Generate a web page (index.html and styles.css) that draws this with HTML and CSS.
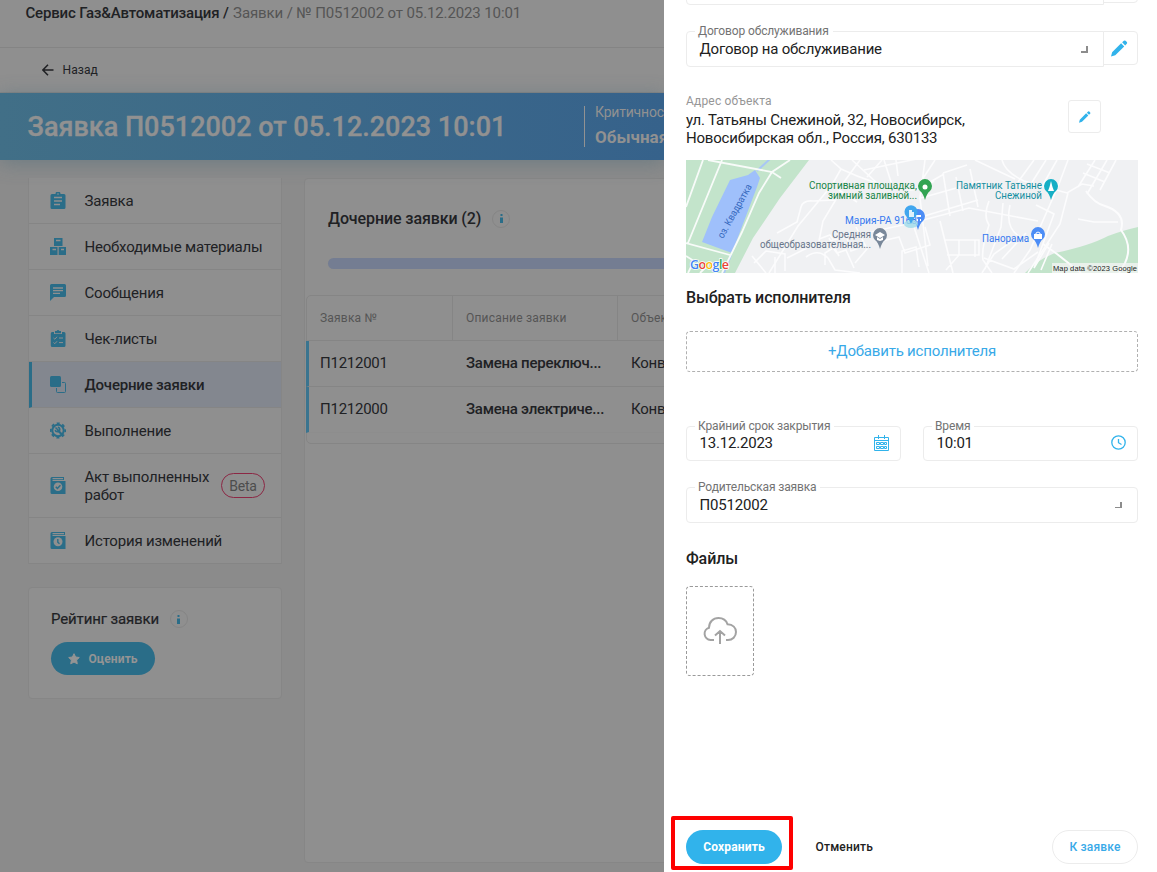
FILE: index.html
```html
<!DOCTYPE html>
<html lang="ru">
<head>
<meta charset="utf-8">
<title>Заявка П0512002</title>
<link rel="stylesheet" href="styles.css">
</head>
<body>
<div class="app">
<div class="page">
  <header class="crumbs"><b class="org">Сервис Газ&amp;Автоматизация /</b><span class="trail">Заявки / № П0512002 от 05.12.2023 10:01</span></header>
  <div class="back">
    <svg width="12" height="12" viewBox="0 0 12 12" fill="none" stroke="currentColor" stroke-width="1.5"><path d="M11.5 6H1M6 .8.9 6 6 11.200"/></svg>
    <span>Назад</span>
  </div>
  <div class="banner">
    <h1>Заявка П0512002 от 05.12.2023 10:01</h1>
    <div class="crit"><span>Критичность</span><b>Обычная</b></div>
  </div>
  <div class="content">
    <aside class="side">
      <nav class="menu">
        <a class="item"><svg class="ic" viewBox="0 0 16 17"><path fill="currentColor" d="M2 2h3.500a2.500 2.500 0 0 1 5 0H14a1.500 1.500 0 0 1 1.500 1.500v12A1.500 1.500 0 0 1 14 17H2A1.500 1.500 0 0 1 .5 15.500v-12A1.500 1.500 0 0 1 2 2z"/><path class="cut" d="M4 5.500h8M4 9h8M4 12.500h6"/><circle cx="8" cy="2" r=".8" fill="#8f8f8f"/></svg><span>Заявка</span></a>
        <a class="item"><svg class="ic" viewBox="0 0 16 17"><path fill="currentColor" d="M4 0h8.500v8H4zM0 9h7.500v8H0zM8.700 9H16v8H8.700z"/><path class="cut" d="M6 2.500h4.500M2.500 11.500H6M11 11.500h3"/></svg><span>Необходимые материалы</span></a>
        <a class="item"><svg class="ic" viewBox="0 0 16 17"><path fill="currentColor" d="M1.500 0h13A1.500 1.500 0 0 1 16 1.500v10a1.500 1.500 0 0 1-1.500 1.500H4l-4 4V1.500A1.500 1.500 0 0 1 1.500 0z"/><path class="cut" d="M3 4h10M3 6.700h10M3 9.400h7"/></svg><span>Сообщения</span></a>
        <a class="item"><svg class="ic" viewBox="0 0 16 17"><path fill="currentColor" d="M2.500 2H4v2h8V2h2a1.500 1.500 0 0 1 1.500 1.500v12A1.500 1.500 0 0 1 14 17H2.300A1.500 1.500 0 0 1 .8 15.500v-12A1.500 1.500 0 0 1 2.500 2zM5 1h1.700a1.400 1.400 0 0 1 2.600 0H11v2.200H5z"/><path class="cut thin" d="m3.500 8 1.300 1.200L7 6.800M3.500 12.500l1.300 1.200L7 11.300M9 8h4M9 12.600h4"/></svg><span>Чек-листы</span></a>
        <a class="item active"><svg class="ic" viewBox="0 0 16 17"><rect width="11" height="11" rx="1.500" fill="currentColor"/><path fill="none" stroke="currentColor" d="M12 6.500h2.500a1 1 0 0 1 1 1v8a1 1 0 0 1-1 1h-7a1 1 0 0 1-1-1V12"/></svg><span>Дочерние заявки</span></a>
        <a class="item"><svg class="ic" viewBox="0 0 16 17"><circle cx="8" cy="8.500" r="5.700" fill="none" stroke="currentColor" stroke-width="2"/><circle cx="8" cy="8.500" r="7.200" fill="none" stroke="currentColor" stroke-width="1.800" stroke-dasharray="3 2.655" stroke-dashoffset="1.500"/><path d="m7.500 8 4.500 4.500" stroke="currentColor" stroke-width="2.200"/><path d="M5.500 5.500 8 8M7.800 5.200a2.300 2.300 0 1 1-2.600 2.600" fill="none" stroke="currentColor" stroke-width="1.500"/></svg><span>Выполнение</span></a>
        <a class="item tall"><svg class="ic" viewBox="0 0 16 17"><path fill="currentColor" fill-rule="evenodd" d="M2 0h12v3H2.500v1H15.500v13H2A1.500 1.500 0 0 1 .5 15.500v-14A1.500 1.500 0 0 1 2 0zM2.500 1v1.200H13V1z"/><circle cx="8" cy="9.800" r="4.300" fill="#8f8f8f"/><path d="m5.800 9.800 1.600 1.700 3-3.200" fill="none" stroke="currentColor" stroke-width="1.500"/></svg><span>Акт выполненных работ</span><em class="beta">Beta</em></a>
        <a class="item"><svg class="ic" viewBox="0 0 16 17"><path fill="currentColor" fill-rule="evenodd" d="M2 0h13v3H2.500v1h13v13H2A1.500 1.500 0 0 1 .5 15.500v-14A1.500 1.500 0 0 1 2 0zM2.500 1v1.200H14V1z"/><circle cx="8" cy="9.800" r="4.500" fill="#8f8f8f"/><path d="M7.800 7v3.200l1.700 1.500" fill="none" stroke="currentColor" stroke-width="1.400"/></svg><span>История изменений</span></a>
      </nav>
      <section class="rating">
        <div class="head"><span>Рейтинг заявки</span><i class="info"><svg width="3" height="9" viewBox="0 0 3 9"><path d="M.5 0h2v2h-2zM0 3.500h3V9H0z" fill="currentColor"/></svg></i></div>
        <button class="rate"><svg width="12" height="12" viewBox="0 0 12 12"><path fill="currentColor" stroke="currentColor" stroke-linejoin="round" d="m6 .7 1.600 3.300 3.700.5-2.700 2.600.7 3.700L6 9.100l-3.300 1.700.7-3.700L.7 4.500 4.400 4z"/></svg><span>Оценить</span></button>
      </section>
    </aside>
    <main class="main">
      <div class="title"><h2>Дочерние заявки (2)</h2><i class="info"><svg width="3" height="9" viewBox="0 0 3 9"><path d="M.5 0h2v2h-2zM0 3.500h3V9H0z" fill="currentColor"/></svg></i></div>
      <div class="progress"></div>
      <div class="table">
        <div class="row th"><span>Заявка №</span><span>Описание заявки</span><span>Объект</span></div>
        <div class="row"><span>П1212001</span><b>Замена переключ...</b><span>Конвектор</span></div>
        <div class="row"><span>П1212000</span><b>Замена электриче...</b><span>Конвектор</span></div>
      </div>
    </main>
  </div>
</div>

<div class="drawer">
  <div class="pair prev"><div class="field joined"></div><div class="edit"></div></div>
  <div class="pair">
    <div class="field joined"><label>Договор обслуживания</label><span>Договор на обслуживание</span><i class="corner"></i></div>
    <div class="edit"><svg width="17" height="17" viewBox="0 0 18 18" fill="#31b3eb"><path d="M0 17.500 1.200 13 10.700 3.500 14 6.800 4.500 16.200zM11.800 2.500 13.600.8Q14.500 0 15.400.8L16.800 2.200Q17.600 3.200 16.700 4L15 5.700z"/></svg></div>
  </div>
  <div class="addr">
    <div><small>Адрес объекта</small><p>ул. Татьяны Снежиной, 32, Новосибирск, Новосибирская обл., Россия, 630133</p></div>
    <div class="box"><svg width="12" height="12" viewBox="0 0 18 18" fill="#31b3eb"><path d="M0 17.500 1.200 13 10.700 3.500 14 6.800 4.500 16.200zM11.800 2.500 13.600.8Q14.500 0 15.400.8L16.800 2.200Q17.600 3.200 16.700 4L15 5.700z"/></svg></div>
  </div>
  <svg class="map" width="452" height="113" viewBox="0 0 452 113">
    <rect width="452" height="113" fill="#f0f1f3"/>
    <path fill="#c3e4cb" d="M0 0h123L94 38 67 78 49 113H0zM452 67v46H339q12-13 30-20 34-7 53-17 16-6 30-9z"/>
    <path fill="#9fc0fb" d="m44 20 18-5 7-5 5 8-3 9-25 66-30-11 10-25z"/>
    <path fill="none" stroke="#a9c7f5" stroke-width="2" d="m71 11 15-14M38 113l7-18"/>
    <g fill="none" stroke="#f8fbf9" stroke-width="1.800">
      <path d="M104 0 86 12 73 33 56 72 36 113M22 0l64 12 9 6M17 0 0 47M36 0 2 83M0 83l44 12M0 96l8 5-6 12M14 113l8-8"/>
    </g>
    <g fill="none" stroke="#fcfcfd" stroke-width="1.600">
      <path d="M145 0l10 9-9 16-34 41-29 47M155 9q34 16 62 20 14 4 31-8M174 0l-19 26M166 0l25 23M196 0l-15 17M155 31l-18 30-4 20M153 30l18 12M91 73l20-11 4-15q2-7 12-6l22-1"/>
      <path d="m101 98 28-14 83-18 29-7 42-11 69 13M120 97q12-9 22 1l7 12 25 3M143 78l10 18M133 79l11-4 8 11M160 75l5 16 11-4M170 67l11 22-12 14M139 105V93l8-5 4 5 9-3 8 18M80 113l-14-17M68 103l12-12 19 3 0 17M89 113V97M192 82l21-5 6 16 25-8-5-18M216 113V91l14-4 3 20"/>
      <path d="m198 0 8 25M210 0l2 16M178 10l57-12M239 0l-5 38 8 68M249 0l-15 23M258 14l-19 11M257 13l7 43M270 17l7 34M284 9l8 38M257 13l24-8M235 38l60-17M235 57l57-17M228 67l15 46M254 61l13 52M259 80h34v15h-32M273 80v15l-13 15M289 80v17"/>
      <path d="M316 0q3 12 22 21l43 12 15-9 12 2M289 0l40 19M348 0l-16 22M360 0l-17 27M371 0l-17 30M382 0l-9 24-29 66-16 23M409 0l-17 27M421 0l-20 34M430 0l-16 30M401 4l23 9M397 13l22 9M382 33l-8 31-32 49"/>
      <path d="M303 41q-6 15 0 24-8 24-6 35l9 13M317 43l-2 24-16 42M324 45q-5 23 9 31l-25 18-12 19M298 98l30 11 24-17M350 45l18 9-20 54 15-25M340 73l-24 26M366 84l-11 26M392 59l16 3h24"/>
      <path stroke-width="2" d="m357 84 14 10 24 19M400 31q8 12 19 15 21 7 16 24 12 16 4 33l-6 10"/>
    </g>
    <g class="pins">
      <path fill="#32a453" d="M239 40q-2-7-5-9a7 7 0 1 1 10 0q-3 2-5 9z"/><circle cx="239" cy="27" r="2.500" fill="#fff"/>
      <path fill="#4c8df6" d="M232 70q-2-7-5-9a7 7 0 1 1 10 0q-3 2-5 9z"/><path d="M229 56h6M231 60h1M234 60h1" stroke="#fff" stroke-width="2"/>
      <path fill="#79889a" d="M194 89q-2-7-5-9a7 7 0 1 1 10 0q-3 2-5 9z"/><path fill="#fff" d="m189 75 5-3 5 3-5 3zM191 77l3 2 3-2v3l-3 1-3-1z"/>
      <path fill="#16afc5" d="M365 40q-2-7-5-9a7 7 0 1 1 10 0q-3 2-5 9z"/><path fill="#fff" d="m365 21 1.500 6 1.500 4h-6l1.500-4z"/>
      <path fill="#4c8df6" d="M352 88q-2-7-5-9a7 7 0 1 1 10 0q-3 2-5 9z"/><path fill="#fff" d="M348 74h8v5h-8z"/><path fill="none" stroke="#fff" d="M350 75v-2q2-2 4 0v2"/>
    </g>
    <g class="places">
      <text x="231" y="29" fill="#188447" textLength="108" lengthAdjust="spacingAndGlyphs">Спортивная площадка,</text><text x="231" y="39" fill="#188447" textLength="89" lengthAdjust="spacingAndGlyphs">зимний заливной...</text>
      <text x="231" y="63.500" fill="#367af0" textLength="72" lengthAdjust="spacingAndGlyphs">Мария-РА 9168</text>
      <text x="185" y="78" fill="#68758a" textLength="39" lengthAdjust="spacingAndGlyphs">Средняя</text><text x="185" y="88" fill="#68758a" textLength="111" lengthAdjust="spacingAndGlyphs">общеобразовательная...</text>
      <text x="356" y="28.500" fill="#158fa1" textLength="86" lengthAdjust="spacingAndGlyphs">Памятник Татьяне</text><text x="356" y="38.500" fill="#158fa1" textLength="47" lengthAdjust="spacingAndGlyphs">Снежиной</text>
      <text x="343" y="82" fill="#367af0" textLength="47" lengthAdjust="spacingAndGlyphs">Панорама</text>
      <text class="lake" transform="translate(37 79) rotate(-61)" fill="#3367bd" textLength="60" lengthAdjust="spacingAndGlyphs">оз. Квадратка</text>
    </g>
    <ellipse cx="225" cy="64" rx="7" ry="4" fill="#9edbea" opacity=".8"/><path fill="#40a6ee" d="M225 64q-2-5-5-8a6.500 6.500 0 1 1 10 0q-3 3-5 8z"/><path fill="#dff2fb" d="M223 50h3v7h-3zM226 52h2v5h-2z"/>
    <text class="google" x="4" y="109" textLength="39"><tspan fill="#4285f4">G</tspan><tspan fill="#ea4335">o</tspan><tspan fill="#fbbc05">o</tspan><tspan fill="#4285f4">g</tspan><tspan fill="#34a853">l</tspan><tspan fill="#ea4335">e</tspan></text>
    <rect x="366" y="103" width="86" height="10" fill="#f5f5f5" opacity=".75"/><text class="copy" x="367" y="111" textLength="84">Map data ©2023 Google</text>
  </svg>
  <h3 class="who">Выбрать исполнителя</h3>
  <div class="add">+Добавить исполнителя</div>
  <div class="dates">
    <div class="field"><label>Крайний срок закрытия</label><span>13.12.2023</span>
      <svg class="cal" width="15" height="16" viewBox="0 0 15 16" fill="none" stroke="#31b3eb"><path d="M.5 15.500v-13h14v13zM0 5.500h15M4.500 0v4M10.500 0v4"/><path d="M2.500 7.500h3v2h-3zM6.500 7.500h3v2h-3zM10.500 7.500h2v2h-2zM2.500 11.500h3v2h-3zM6.500 11.500h3v2h-3zM10.500 11.500h2v2h-2z"/></svg></div>
    <div class="field"><label>Время</label><span>10:01</span>
      <svg class="cal" width="15" height="15" viewBox="0 0 15 15" fill="none" stroke="#31b3eb" stroke-width="1.300"><circle cx="7.500" cy="7.500" r="6.700"/><path d="M7.500 4v3.700l3 1.800"/></svg></div>
  </div>
  <div class="field parent"><label>Родительская заявка</label><span>П0512002</span><i class="corner small"></i></div>
  <h3 class="files">Файлы</h3>
  <div class="upload"><svg width="34" height="28" viewBox="0 0 34 28" fill="none" stroke="#a3a3a3" stroke-width="2"><path d="M11 23H7.500A6.300 6.300 0 0 1 6 10.700C6 5 10 1 15.500 1c4.500 0 7.700 2.300 9 6.200C30 7.500 33 11 33 15c0 4.500-3.500 8-8 8h-2M17 27V14.500M12 18.500l5-4.500 5 4.500"/></svg></div>
  <footer class="foot"><button class="save">Сохранить</button><span class="cancel">Отменить</span><button class="go">К заявке</button></footer>
  <div class="mark"></div>
</div>
</div>
</body>
</html>
```
FILE: styles.css
```css
* { box-sizing: border-box; }
body { margin: 0; font: 15px/18px Roboto, sans-serif; letter-spacing: -.2px; color: #212121; background: #fff; }
h1, h2, h3, p { margin: 0; font-weight: 500; }
button { border: 0; font: 500 13px/18px Roboto, sans-serif; }
i, em { font-style: normal; }
b { font-weight: 500; }
.app { display: flex; width: 1157px; height: 872px; overflow: hidden; }

/* dimmed page */
.page { width: 664px; height: 872px; overflow: hidden; background: #8b8b8b; color: #202124; display: flex; flex-direction: column; flex: none; }
.crumbs { height: 48px; flex: none; padding: 4px 0 0 25.500px; background: #8f8f8f; border-bottom: 1px solid #848484; display: flex; gap: 4.500px; white-space: nowrap; }
.org { letter-spacing: -.18px; }
.trail { color: #555; letter-spacing: -.12px; }
.back { height: 45px; flex: none; padding-left: 42px; display: flex; align-items: center; gap: 8.500px; font-size: 12px; letter-spacing: .1px; background: #8f8f8f; border-bottom: 1px solid #858585; }
.back svg { flex: none; }
.banner { height: 67px; flex: none; position: relative; display: flex; align-items: center; padding-left: 27.500px; color: #919191; background: linear-gradient(90deg, #416f87, #36628b); box-shadow: 0 3px 18px rgba(70, 105, 120, .45); }
.banner h1 { width: 556.500px; flex: none; font-size: 27px; line-height: 34px; font-weight: 500; white-space: nowrap; letter-spacing: 0; -webkit-text-stroke: .4px; }
.crit { flex: none; border-left: 1px solid #929292; height: 41px; padding-left: 10px; display: flex; flex-direction: column; white-space: nowrap; font-size: 14px; line-height: 16px; gap: 8px; }
.crit span { margin-top: -2px; }
.crit b { font-size: 17px; line-height: 18px; font-weight: 700; letter-spacing: 0; }
.content { display: flex; gap: 22px; padding: 18px 0 0 28px; }
.side { width: 254px; flex: none; }
.menu { display: flex; flex-direction: column; background: #8f8f8f; border: solid #868686; border-width: 0 1px; }
.item { display: flex; align-items: center; height: 46px; padding-left: 21px; border-bottom: 1px solid #858585; font-weight: 400; }
.item > span { margin-left: 18.500px; white-space: nowrap; }
.item.tall { height: 64px; }
.item.tall > span { white-space: normal; width: 127px; }
.ic { width: 16px; height: 17px; color: #2a6d88; flex: none; }
.cut { fill: none; stroke: #8f8f8f; stroke-width: 1.300; }
.thin { stroke-width: 1; }
.active { background: #83878f; border-left: 3px solid #2a6d88; padding-left: 18px; font-weight: 500; }
.beta { width: 44px; height: 25px; flex: none; margin-left: 9.500px; border: 1px solid #8c2744; border-radius: 13px; text-align: center; line-height: 24px; font-size: 14px; color: #4d4d4d; }
.rating { margin-top: 23px; height: 112px; background: #8f8f8f; border: 1px solid #868686; border-radius: 4px; padding: 22px; }
.head, .title { display: flex; align-items: center; gap: 11px; }
.head { height: 18px; }
.head span { -webkit-text-stroke: .2px; letter-spacing: -.14px; }
.info { width: 18px; height: 18px; border: 1px solid #858585; border-radius: 50%; display: flex; align-items: center; justify-content: center; color: #2a6d88; flex: none; }
.rate { margin-top: 14px; width: 104px; height: 33px; border-radius: 17px; background: #2a6d88; color: #949494; display: flex; align-items: center; gap: 9px; padding: 0 0 0 16.500px; font-size: 12px; font-weight: 700; letter-spacing: .1px; }
.main { width: 600px; height: 685px; flex: none; background: #8f8f8f; border: 1px solid #868686; border-radius: 4px; padding-left: 1px; }
.title { padding: 30px 0 0 22px; height: 49px; }
.title h2 { font-size: 16px; line-height: 19px; letter-spacing: -.1px; }
.progress { margin: 30px 0 0 22px; height: 11px; border-radius: 6px; background: #747d92; }
.table { margin-top: 26px; height: 149px; border: 1px solid #858585; border-radius: 5px; }
.row { display: grid; grid-template-columns: 143px 165px 1fr; height: 46px; border-bottom: 1px solid #858585; border-left: 3px solid #3a748f; white-space: nowrap; line-height: 45px; letter-spacing: -.25px; margin-left: -1px; }
.row > * { padding-left: 11px; }
.row > * + * { padding-left: 14px; }
.row:last-child { border-bottom-color: #8d8d8d; }
.row.th { height: 45px; font-size: 12px; letter-spacing: .2px; color: #555; border-left-color: transparent; line-height: 44px; }
.th > * + * { border-left: 1px solid #858585; padding-left: 13px; }

/* drawer */
.drawer { width: 493px; height: 872px; flex: none; position: relative; padding: 0 19px 0 22px; display: flex; flex-direction: column; background: #fff; }
.pair { display: flex; height: 36px; }
.prev { height: 4px; margin-bottom: 27px; align-items: flex-end; }
.prev .field { height: 12px; margin-bottom: -1px; }
.prev .edit { height: 12px; margin-bottom: 1px; }
.field { position: relative; flex: 1; height: 36px; border: 1px solid #ececec; border-radius: 4px; padding: 8px 12px 0 12.500px; white-space: nowrap; }
.joined { border-radius: 4px 0 0 4px; }
.field label { position: absolute; top: -9px; left: 8px; padding: 0 4px 0 3px; font-size: 12px; line-height: 16px; color: #737373; background: #fff; letter-spacing: -.14px; }
.edit { width: 35px; height: 34px; margin-left: -1px; border: 1px solid #ececec; border-radius: 0 4px 4px 0; display: flex; align-items: center; justify-content: center; padding-right: 2px; }
.corner { position: absolute; right: 15px; top: 14px; width: 7px; height: 7px; border: solid #8c8c8c; border-width: 0 2px 2px 0; }
.small { border-width: 0 2px 1px 0; height: 6px; }
.addr { display: flex; justify-content: space-between; padding-right: 37px; height: 93px; padding-top: 26px; }
.addr small { display: block; font-size: 12px; line-height: 16px; color: #969696; letter-spacing: .18px; }
.addr p { width: 310px; margin-top: 2px; font-weight: 400; }
.box { width: 33px; height: 33px; margin-top: 7px; border: 1px solid #ececec; border-radius: 3px; display: flex; align-items: center; justify-content: center; }
.map { display: block; flex: none; letter-spacing: 0; }
.places { font: 10px Roboto, sans-serif; text-anchor: end; paint-order: stroke; stroke: #f0f1f3; stroke-width: 1.500px; }
.lake { text-anchor: start; stroke: none; }
.google { font: 600 12.500px "Open Sans", sans-serif; paint-order: stroke; stroke: #fff; stroke-width: 1.500px; }
.copy { font: 7.500px "Liberation Sans", sans-serif; fill: #222; }
h3 { font-size: 16px; line-height: 18px; letter-spacing: -.12px; }
.who { margin-top: 16px; }
.add { margin-top: 24px; height: 41px; flex: none; border: 1px dashed #b0b0b0; border-radius: 4px; text-align: center; line-height: 38px; color: #38a9e8; }
.dates { display: flex; gap: 22px; margin-top: 54px; }
.dates .field { height: 35px; padding-top: 7px; }
.cal { position: absolute; right: 11px; top: 8px; }
.parent { margin-top: 26px; flex: none; }
.files { margin-top: 27px; }
.upload { margin-top: 18px; width: 68px; height: 90px; border: 1px dashed #9a9a9a; border-radius: 4px; display: flex; align-items: center; justify-content: center; }
.foot { margin-top: 154px; display: flex; align-items: center; height: 34px; font-size: 12px; }
.save { width: 96px; height: 34px; border-radius: 17px; background: #31b3eb; color: #fff; font-size: 12px; font-weight: 700; padding: 0; letter-spacing: .15px; }
.cancel { margin-left: 33.500px; font-weight: 500; letter-spacing: .2px; }
.go { margin-left: auto; width: 86px; height: 34px; border: 1px solid #ececec; border-radius: 17px; background: #fff; color: #38a9e8; font-size: 12px; padding: 0; letter-spacing: .15px; }
.mark { position: absolute; left: 7px; top: 816px; width: 122px; height: 54px; border: 4px solid #fe0000; border-radius: 2px; }
```
